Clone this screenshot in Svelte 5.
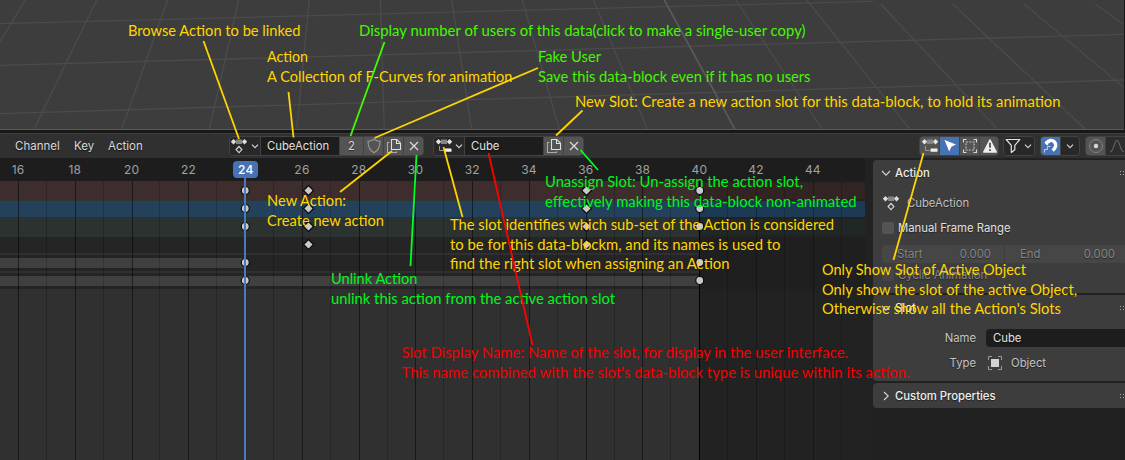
<script>
  const FRAME_W = 56.77;
  const frameX = (f) => 18.5 + ((f - 16) / 2) * FRAME_W;
  const labels = [16, 18, 20, 22, 24, 26, 28, 30, 32, 34, 36, 38, 40, 42, 44];
  const minors = labels.map((f) => f + 1).filter((f) => f < 46);

  const bands = [
    [181, 19, '#3d2d2d'], [200, 1, '#303632'], [201, 16, '#24415b'], [217, 20, '#2c3230'],
    [237, 16, '#252525'], [253, 2, '#303030'], [255, 16, '#252525'],
    [271, 2, '#303030'], [273, 16, '#252525']
  ];

  const circles = [[24, 190.5], [24, 226.5], [24, 208.5], [24, 262.5], [24, 280.5],
    [40, 190.5], [40, 208.5], [40, 226.5], [40, 262.5], [40, 280.5]];
  const diamonds = [[308.5, 190.5], [308.5, 208.5], [308.5, 226.5], [308.5, 244.5],
    [586.5, 190.5], [586.5, 208.5], [586.5, 226.5], [586.5, 244.5]];

  const floor = [
    [76, 0, 0, 125], [290, 0, 102, 388], [503, 0, 365, 388], [716, 0, 628, 388], [928, 0, 890, 388],
    [1141, 0, 1153, 388], [1355, 0, 1415, 388], [1567, 0, 1678, 388], [1780, 0, 1942, 388],
    [2207, 0, 2467, 388], [2420, 0, 2730, 388], [2642, 12, 2993, 388], [2858, 12, 3256, 388],
    [3072, 12, 3375, 265], [3285, 12, 3375, 76],
    [0, 71, 2620, 4], [0, 196, 3375, 103], [0, 341, 3375, 240]
  ];

  const Y = '#ffd500', G = '#44f800', N = '#00f51f', R = '#f50000';
  const notes = [
    [128, 36, 172.5, Y, 'Browse Action to be linked'],
    [359, 36, 446.5, G, 'Display number of users of this data(click to make a single-user copy)'],
    [267, 62, 41, Y, 'Action'],
    [267, 82, 245.5, Y, 'A Collection of F-Curves for animation'],
    [538, 62, 63, G, 'Fake User'],
    [538, 82, 272.5, G, 'Save this data-block even if it has no users'],
    [575, 107, 485.5, Y, 'New Slot: Create a new action slot for this data-block, to hold its animation'],
    [267, 206, 79, Y, 'New Action:'],
    [267, 226, 117, Y, 'Create new action'],
    [331, 284, 86.5, N, 'Unlink Action'],
    [331, 304, 284, N, 'unlink this action from the active action slot'],
    [545, 187, 258, N, 'Unassign Slot: Un-assign the action slot,'],
    [545, 207, 311.5, N, 'effectively making this data-block non-animated'],
    [450, 230, 384, Y, 'The slot identifies which sub-set of the Action is considered'],
    [450, 250, 330.5, Y, 'to be for this data-blockm, and its names is used to'],
    [450, 269, 279.5, Y, 'find the right slot when assigning an Action'],
    [822, 275, 204, Y, 'Only Show Slot of Active Object'],
    [822, 295, 255, Y, 'Only show the slot of the active Object,'],
    [822, 314, 239, Y, "Otherwise show all the Action's Slots"],
    [401.5, 358, 446.5, R, 'Slot Display Name: Name of the slot, for display in the user interface.'],
    [401.5, 378, 508, R, "This name combined with the slot's data-block type is unique within its action."]
  ];
  const leaders = [
    [203.5, 41, 239, 139, Y], [288.5, 92, 293.5, 137.5, Y], [384.5, 42, 350.5, 136, '#40ff00'],
    [538, 68, 374.5, 138, Y], [582.5, 110.5, 556, 135.5, Y], [392, 151, 340, 192, Y],
    [416.5, 155, 410.5, 266, '#00ff22'], [580.5, 150, 598, 170, '#00ff22'],
    [443.5, 147, 462.5, 217, Y], [488.5, 153, 532.5, 345, '#ff0000'], [923.5, 153, 893.5, 260, Y]
  ];
</script>

{#snippet actionIcon()}
  <svg width="18" height="18" viewBox="0 0 18 18">
    <rect x="6" y="2.500" width="6" height="4.500" fill="#858585" />
    <path d="M3.500 2 6.200 4.700 3.500 7.400.8 4.700ZM14.500 2l2.700 2.700-2.700 2.700-2.700-2.700Z" fill="#dedede" />
    <path d="m9 9.500 2.900 3.100L9 15.700l-2.900-3.100Z" fill="none" stroke="#d5d5d5" stroke-width="1.200" />
  </svg>
{/snippet}

{#snippet slotIcon()}
  <svg width="18" height="18" viewBox="0 0 18 18">
    <rect x="6" y="2.500" width="6" height="4.500" fill="#858585" />
    <path d="M3.500 2 6.200 4.700 3.500 7.400.8 4.700ZM14.500 2l2.700 2.700-2.700 2.700-2.700-2.700Z" fill="#e5e5e5" />
    <path d="M4.500 9v4.500h4" fill="none" stroke="#999" stroke-width="1" />
    <rect x="9.500" y="11.500" width="7" height="3.300" rx=".6" fill="#f0f0f0" />
  </svg>
{/snippet}

{#snippet chevron()}
  <svg width="8" height="8" viewBox="0 0 8 8"><path d="m1 2.700 3 3 3-3" fill="none" stroke="#d2d2d2" stroke-width="1.200" /></svg>
{/snippet}

{#snippet panelChevron()}
  <svg width="10" height="10" viewBox="0 0 10 10"><path d="m1 3 4 4.200L9 3" fill="none" stroke="#d2d2d2" stroke-width="1.150" /></svg>
{/snippet}

{#snippet copyIcon()}
  <svg width="18" height="18" viewBox="0 0 18 18" fill="none" stroke="#e0e0e0" stroke-width="1.100">
    <path d="M6.500 2.500h5.300l3.700 3.700v6.300h-9Z" /><path d="M11.500 2.500v4h4" />
    <path d="M4.500 5.500h-2v10h9v-1.200" stroke="#aaa" />
  </svg>
{/snippet}

{#snippet closeIcon()}
  <svg width="18" height="18" viewBox="0 0 18 18"><path d="m5 5 8 8m0-8-8 8" stroke="#dedede" stroke-width="1.150" /></svg>
{/snippet}

{#snippet grip()}
  <svg class="grip" width="5" height="4" viewBox="0 0 5 4" fill="#a8a8a8"><path d="M0 0h1v1H0zM3 0h1v1H3zM0 3h1v1H0zM3 3h1v1H3z" /></svg>
{/snippet}

<div class="screen">
  <div class="viewport">
    <svg width="1125" height="130" viewBox="0 0 3375 390" fill="none">
      {#each floor as [x1, y1, x2, y2]}
        <line {x1} {y1} {x2} {y2} stroke="#4b4b4b" stroke-width="4" />
      {/each}
      <line x1="1993" y1="0" x2="2205" y2="388" stroke="#5a5a5a" stroke-width="5" />
    </svg>
  </div>

  <div class="header">
    <nav><span>Channel</span><span>Key</span><span>Action</span></nav>
    <div class="group action">
      <div class="cell drop">{@render actionIcon()}{@render chevron()}</div>
      <div class="cell field">CubeAction</div>
      <div class="cell btn users">2</div>
      <div class="cell btn">
        <svg width="18" height="18" viewBox="0 0 18 18"><path d="M9 2.200c1.800 1.400 3.600 2 6 2.100 0 5-1.200 9-6 11.500C4.200 13.300 3 9.300 3 4.300c2.400-.1 4.200-.7 6-2.100Z" fill="none" stroke="#9b9b9b" stroke-width="1.100" /></svg>
      </div>
      <div class="cell btn">{@render copyIcon()}</div>
      <div class="cell btn">{@render closeIcon()}</div>
    </div>
    <div class="group slot">
      <div class="cell drop">{@render slotIcon()}{@render chevron()}</div>
      <div class="cell field">Cube</div>
      <div class="cell btn">{@render copyIcon()}</div>
      <div class="cell btn">{@render closeIcon()}</div>
    </div>

    <div class="group filters">
      <div class="cell btn">{@render slotIcon()}</div>
      <div class="cell btn on">
        <svg width="18" height="18" viewBox="0 0 18 18"><path d="m3.500 3 11.500 4.600-4.600 2.200-2.200 4.700Z" fill="#fff" /></svg>
      </div>
      <div class="cell btn">
        <svg width="18" height="18" viewBox="0 0 18 18" fill="none" stroke="#d8d8d8" stroke-width="1.100">
          <path d="M2.500 5.500v-3h3m7 0h3v3m0 7v3h-3m-7 0h-3v-3" /><rect x="5" y="5" width="8" height="8" stroke="#c4c4c4" stroke-dasharray="2 1.200" />
        </svg>
      </div>
      <div class="cell btn">
        <svg width="18" height="18" viewBox="0 0 18 18"><path d="M9 3 15.200 15H2.800Z" fill="#eee" stroke="#eee" stroke-width="1.600" stroke-linejoin="round" /><path d="M9 5.700v5M9 12.200v1.800" stroke="#444" stroke-width="1.700" /></svg>
      </div>
    </div>
    <div class="group funnel">
      <div class="cell drop">
        <svg width="18" height="18" viewBox="0 0 18 18"><path d="M2.200 2.500h13.600l-5 5.800v4.400l-3.500 2.800V8.300Z" fill="none" stroke="#e2e2e2" stroke-width="1.200" stroke-linejoin="round" /></svg>
        {@render chevron()}
      </div>
    </div>
    <div class="group snap">
      <div class="cell btn on">
        <svg width="18" height="18" viewBox="0 0 18 18" fill="none">
          <path d="M4.300 6.200C7 3 10 2.600 12.300 4.800c2.300 2.400 1.800 5.800-1.600 8.800" stroke="#fff" stroke-width="3.400" />
          <path d="m3.200 5 2.600 2.700" stroke="#fff" stroke-width="2" /><path d="M2.500 15.500v-3h3v-3h3" stroke="#c3d1e6" stroke-width="1" />
        </svg>
      </div>
      <div class="cell caret">{@render chevron()}</div>
    </div>
    <div class="group prop">
      <div class="cell btn">
        <svg width="18" height="18" viewBox="0 0 18 18"><circle cx="9" cy="9" r="6.500" fill="none" stroke="#838383" /><circle cx="9" cy="9" r="2.200" fill="#d8d8d8" /></svg>
      </div>
      <div class="cell">
        <svg width="22" height="18" viewBox="0 0 22 18"><path d="M4 15C8 15 8 3.500 11 3.500S14 15 18 15" fill="none" stroke="#666" stroke-width="1.100" /></svg>
      </div>
    </div>
  </div>

  <div class="body">
    <svg class="timeline" width="865" height="302" viewBox="0 158 865 302">
      <rect x="0" y="158" width="865" height="302" fill="#303030" />
      {#each bands as [y, h, fill]}<rect x="0" {y} width="865" height={h} {fill} />{/each}
      <rect x="0" y="258" width="245" height="10" fill="#404040" />
      <rect x="0" y="276" width="699" height="10" fill="#404040" />
      <rect x="700" y="181" width="165" height="279" fill="#222" />
      <rect x="700" y="183" width="165" height="16" fill="#332424" />
      <rect x="700" y="201" width="165" height="16" fill="#1d3a54" />
      <rect x="700" y="219" width="165" height="16" fill="#202725" />
      <rect x="700" y="237" width="165" height="52" fill="#1f1f1f" />
      <g shape-rendering="crispEdges">
        {#each labels as f}<rect x={Math.floor(frameX(f))} y="181" width="1" height="279" fill="#000" opacity={f > 40 ? 0.3 : 0.5} />{/each}
        {#each minors as f}<rect x={Math.floor(frameX(f) - 0.5)} y="181" width="1" height="279" fill="#000" opacity=".2" />{/each}
        <rect x="699" y="181" width="1" height="279" fill="#000" />
      </g>
      <rect x="0" y="158" width="865" height="23" fill="#1d1d1d" />
      {#each labels as f}
        {#if f !== 24}<text x={frameX(f) - 0.4} y="174" text-anchor="middle" class="tick">{f}</text>{/if}
      {/each}
      {#each circles as [f, cy]}<circle cx={frameX(f) - (f === 24 ? 0.3 : 0)} {cy} r="4" fill="#c9c9c9" stroke="#080808" stroke-width="1.200" />{/each}
      {#each diamonds as [x, y]}<path d="M{x} {y - 5}l5 5-5 5-5-5Z" fill="#c9c9c9" stroke="#080808" stroke-width="1.200" />{/each}
      <rect x="244" y="176" width="2" height="284" fill="#4c78bd" />
      <rect x="233" y="161" width="25" height="17" rx="4" fill="#4772b3" />
      <text x="245.800" y="173.500" text-anchor="middle" class="tick now">24</text>
    </svg>
    <div class="gutter"></div>

    <aside>
      <section class="p1">
        <h2>{@render panelChevron()}<span>Action</span>{@render grip()}</h2>
        <div class="row name">{@render actionIcon()}<span>CubeAction</span></div>
        <div class="row check"><i></i><span>Manual Frame Range</span></div>
        <div class="row range"><div><span>Start</span><span>0.000</span></div><div><span>End</span><span>0.000</span></div></div>
        <div class="row check dim"><i></i><span>Cyclic Animation</span></div>
      </section>
      <section class="p2">
        <h2>{@render panelChevron()}<span>Slot</span>{@render grip()}</h2>
        <div class="row prop-row"><span class="key">Name</span><div class="input">Cube</div></div>
        <div class="row prop-row"><span class="key">Type</span>
          <svg width="18" height="18" viewBox="0 0 18 18"><path d="M2.500 6V2.500H6m6 0h3.500V6m0 6v3.500H12m-6 0H2.500V12" fill="none" stroke="#999" /><rect x="5" y="5" width="8" height="8" fill="#d2d2d2" /></svg>
          <span>Object</span>
        </div>
      </section>
      <section class="p3">
        <h2 class="closed">{@render panelChevron()}<span>Custom Properties</span>{@render grip()}</h2>
      </section>
    </aside>
  </div>

  <svg class="notes" width="1125" height="460" viewBox="0 0 1125 460">
    {#each notes as [x, y, len, fill, text]}
      <text {x} {y} textLength={len} lengthAdjust="spacingAndGlyphs" {fill}>{text}</text>
    {/each}
    {#each leaders as [x1, y1, x2, y2, stroke]}
      <line {x1} {y1} {x2} {y2} {stroke} stroke-width="1.800" />
    {/each}
  </svg>
</div>

<style>
  :global(body) { margin: 0; background: #1d1d1d; }
  * { box-sizing: border-box; }
  svg { display: block; flex: none; }
  .screen { position: relative; width: 1125px; height: 460px; overflow: hidden; display: flex; flex-direction: column; background: #181818; color: #d9d9d9; font: 11.300px/12px Inter, sans-serif; }
  .viewport { height: 130px; width: 1124px; overflow: hidden; background: #3d3d3d; border-bottom: 1px solid #5a5a5a; flex: none; }
  .header { display: flex; align-items: flex-start; height: 25px; margin-top: 3px; padding: 2px 0 0; background: #303030; border-top: 1px solid #3d3d3d; flex: none; white-space: nowrap; text-shadow: 0 1px 1px #0008; }
  nav { display: flex; flex: none; width: 229px; padding-left: 15px; line-height: 20px; font-size: 11.500px; }
  nav span:nth-child(1) { width: 59px; }
  nav span:nth-child(2) { width: 34px; }
  .group { display: flex; height: 20px; gap: 1px; border: 1px solid #424242; border-radius: 4px; background: #424242; overflow: hidden; flex: none; }
  .cell { display: flex; align-items: center; justify-content: center; height: 18px; background: #282828; flex: none; }
  .drop { width: 30px; justify-content: flex-start; padding-left: 1px; gap: 2px; }
  .field { width: 78px; justify-content: flex-start; padding-left: 6px; background: #1d1d1d; color: #e2e2e2; }
  .btn { width: 19px; background: #545454; }
  .users { width: 23px; }
  .on { background: #4772b3; }
  .action { width: 195px; }
  .action .drop { padding-left: 0; gap: 3px; }
  .slot { width: 151px; margin-left: 9px; }
  .filters { width: 80px; margin-left: 335px; }
  .funnel { width: 32px; margin-left: 4px; }
  .funnel .drop { padding-left: 0; }
  .snap { width: 40px; margin-left: 5px; }
  .caret { width: 19px; padding-right: 2px; }
  .prop { width: 45px; margin-left: 5px; }
  .prop .cell:last-child { background: #2d2d2d; }
  .body { display: flex; height: 302px; flex: none; }
  .tick { font: 12px Inter, sans-serif; letter-spacing: .2px; fill: #a0a0a0; }
  .now { fill: #fff; font-weight: 500; }
  .gutter { width: 8px; background: #222; }
  aside { width: 252px; padding-top: 2px; background: #212121; display: flex; flex-direction: column; gap: 2px; text-shadow: 0 1px 1px #0007; }
  section { background: #3d3d3d; border-radius: 4px 0 0 4px; overflow: hidden; }
  .p1 { height: 133px; }
  .p2 { height: 86px; }
  .p3 { height: 25px; }
  h2 { display: flex; align-items: center; height: 26px; margin: 0; padding: 0 0 0 8px; font-size: 11.300px; font-weight: 500; color: #eee; }
  h2 > span { margin-left: 4px; flex: 1; }
  .closed > svg:first-child { transform: rotate(-90deg); }
  .row { display: flex; align-items: center; }
  .name { height: 20px; margin: 7px 0 0 9px; gap: 7px; color: #c0c0c0; }
  .check { height: 18px; margin: 6px 0 0 9px; gap: 4px; color: #e0e0e0; }
  .check i { width: 12px; height: 12px; border-radius: 2px; background: #545454; }
  .range { height: 19px; margin: 7px 0 0 9px; gap: 1px; color: #858585; }
  .range div { display: flex; flex: none; justify-content: space-between; align-items: center; width: 122px; height: 18px; padding: 0 13px 0 15px; background: #464646; }
  .range div:first-child { border-radius: 4px 0 0 4px; }
  .range div:last-child { width: 120px; padding-right: 10px; }
  .dim { margin-top: 3px; color: #858585; }
  .dim i { background: #464646; }
  .prop-row { height: 20px; margin-top: 7px; color: #c4c4c4; }
  .prop-row + .prop-row { margin-top: 5px; }
  .key { width: 103px; text-align: right; margin-right: 10px; }
  .prop-row svg { margin-right: 7px; }
  .input { flex: 1; height: 18px; padding-left: 7px; line-height: 18px; border-radius: 4px 0 0 4px; background: #1d1d1d; color: #e2e2e2; }
  .notes { position: absolute; left: 0; top: 0; font: 14.600px Lato, sans-serif; }
</style>
